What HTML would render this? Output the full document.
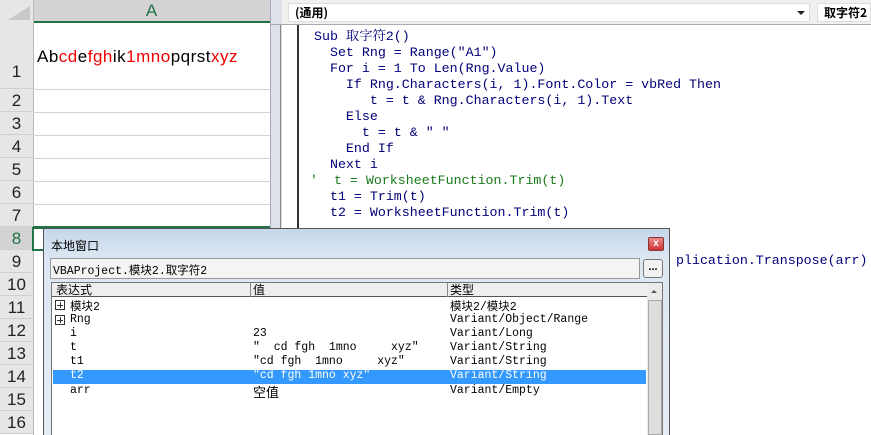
<!DOCTYPE html>
<html><head><meta charset="utf-8"><style>
*{margin:0;padding:0;box-sizing:border-box}
body{width:871px;height:435px;overflow:hidden;background:#fff;position:relative;font-family:"Liberation Sans","Noto Sans CJK SC",sans-serif}
.a{position:absolute}
.rn{position:absolute;left:0;width:33px;text-align:center;font-size:17px;color:#222;background:#e6e6e6;border-bottom:1px solid #cfcfcf}
.hl{position:absolute;left:33px;width:237px;height:1px;background:#d4d4d4}
.code{position:absolute;left:314px;font-family:"Liberation Mono","Noto Serif CJK SC",monospace;font-size:13.3px;color:#00007a;white-space:pre;line-height:16px}
.m{font-family:"Liberation Mono","Noto Sans CJK SC",monospace;font-size:11.5px;white-space:pre;position:absolute;color:#000}
</style></head><body>
<div class="a" style="left:0;top:0;width:33px;height:22px;background:#e6e6e6"></div>
<div class="a" style="left:8px;top:6px;width:0;height:0;border-left:22px solid transparent;border-bottom:14px solid #c8c8c8"></div>
<div class="a" style="left:33px;top:0;width:237px;height:22px;background:#d3d3d3;color:#217346;font-size:17px;text-align:center;line-height:22px">A</div>
<div class="a" style="left:33px;top:21px;width:237px;height:2px;background:#217346"></div>
<div class="a" style="left:33px;top:0;width:1px;height:435px;background:#bbb"></div>
<div class="rn" style="top:22px;height:67px;line-height:100px">1</div>
<div class="rn" style="top:89px;height:23px;line-height:23px">2</div>
<div class="rn" style="top:112px;height:23px;line-height:23px">3</div>
<div class="rn" style="top:135px;height:23px;line-height:23px">4</div>
<div class="rn" style="top:158px;height:23px;line-height:23px">5</div>
<div class="rn" style="top:181px;height:23px;line-height:23px">6</div>
<div class="rn" style="top:204px;height:23px;line-height:23px">7</div>
<div class="rn" style="top:227px;height:23px;line-height:23px;background:#d3d3d3;color:#217346">8</div>
<div class="rn" style="top:250px;height:23px;line-height:23px">9</div>
<div class="rn" style="top:273px;height:23px;line-height:23px">10</div>
<div class="rn" style="top:296px;height:23px;line-height:23px">11</div>
<div class="rn" style="top:319px;height:23px;line-height:23px">12</div>
<div class="rn" style="top:342px;height:23px;line-height:23px">13</div>
<div class="rn" style="top:365px;height:23px;line-height:23px">14</div>
<div class="rn" style="top:388px;height:23px;line-height:23px">15</div>
<div class="rn" style="top:411px;height:23px;line-height:23px">16</div>
<div class="hl" style="top:89px"></div><div class="hl" style="top:112px"></div><div class="hl" style="top:135px"></div><div class="hl" style="top:158px"></div><div class="hl" style="top:181px"></div><div class="hl" style="top:204px"></div>
<div class="a" style="left:33px;top:226px;width:237px;height:2px;background:#217346"></div>
<div class="a" style="left:32px;top:227px;width:12px;height:24px;border:2px solid #217346;border-right:none"></div>
<div class="a" style="left:37px;top:47px;font-size:17px;letter-spacing:0.5px;color:#000">Ab<span style="color:#e00">cd</span>e<span style="color:#e00">fgh</span>ik<span style="color:#e00">1mno</span>pqrst<span style="color:#e00">xyz</span></div>
<div class="a" style="left:270px;top:0;width:601px;height:435px;background:#fff"></div>
<div class="a" style="left:270px;top:0;width:601px;height:25px;background:#f0f0f0"></div>
<div class="a" style="left:270px;top:0;width:12px;height:435px;background:#dde2e8;border-left:1px solid #aab"></div>
<div class="a" style="left:280px;top:25px;width:1px;height:410px;background:#888"></div>
<div class="a" style="left:297px;top:25px;width:2px;height:410px;background:#333"></div>
<div class="a" style="left:288px;top:3px;width:522px;height:19px;background:#fff;border:1px solid #ddd;font-weight:bold;font-size:12px;line-height:17px;padding-left:6px;font-family:'Noto Sans CJK SC',sans-serif">(通用)</div>
<div class="a" style="left:797px;top:11px;border-left:4px solid transparent;border-right:4px solid transparent;border-top:4px solid #222"></div>
<div class="a" style="left:817px;top:3px;width:54px;height:19px;background:#fff;border:1px solid #ddd;font-weight:bold;font-size:12px;line-height:17px;padding-left:6px;font-family:'Noto Sans CJK SC',sans-serif">取字符2</div>
<div class="a" style="left:270px;top:24px;width:601px;height:1px;background:#aaa"></div>
<div class="code" style="top:29px">Sub 取字符2()
  Set Rng = Range("A1")
  For i = 1 To Len(Rng.Value)
    If Rng.Characters(i, 1).Font.Color = vbRed Then
       t = t &amp; Rng.Characters(i, 1).Text
    Else
      t = t &amp; " "
    End If
  Next i
<span style="color:#1a7a1a;margin-left:-4px">'  t = WorksheetFunction.Trim(t)</span>
  t1 = Trim(t)
  t2 = WorksheetFunction.Trim(t)</div>
<div class="code" style="top:253px;left:676px">plication.Transpose(arr)</div>
<div class="a" style="left:43px;top:228px;width:627px;height:207px;background:linear-gradient(#c6d6ea,#dce7f3 30px,#e4ecf6);border:1px solid #555;border-bottom:none"></div>
<div class="a" style="left:51px;top:237px;font-size:12px;font-family:'Noto Sans CJK SC',sans-serif">本地窗口</div>
<div class="a" style="left:648px;top:237px;width:16px;height:14px;background:linear-gradient(#e88,#c33);border:1px solid #833;border-radius:2px;color:#fff;font-size:10px;font-weight:bold;text-align:center;line-height:12px">x</div>
<div class="a" style="left:50px;top:258px;width:590px;height:21px;background:#f4f4f4;border:1px solid #999"></div>
<div class="m" style="left:53px;top:262px">VBAProject.模块2.取字符2</div>
<div class="a" style="left:643px;top:259px;width:20px;height:19px;background:#f2f2f2;border:1px solid #777;border-radius:3px;font-size:11px;font-weight:bold;text-align:center;line-height:14px">...</div>
<div class="a" style="left:51px;top:282px;width:612px;height:153px;background:#fff;border:1px solid #777;border-bottom:none"></div>
<div class="a" style="left:52px;top:283px;width:595px;height:14px;background:#eee;border-bottom:1px solid #555"></div>
<div class="a" style="left:250px;top:283px;width:1px;height:14px;background:#888"></div>
<div class="a" style="left:447px;top:283px;width:1px;height:14px;background:#888"></div>
<div class="m" style="left:56px;top:282px;font-family:'Noto Sans CJK SC',sans-serif;font-size:12px;line-height:15px">表达式</div>
<div class="m" style="left:253px;top:282px;font-family:'Noto Sans CJK SC',sans-serif;font-size:12px;line-height:15px">值</div>
<div class="m" style="left:450px;top:282px;font-family:'Noto Sans CJK SC',sans-serif;font-size:12px;line-height:15px">类型</div>
<div class="a" style="left:647px;top:283px;width:15px;height:152px;background:#eaeaea"></div>
<div class="a" style="left:651px;top:290px;border-left:3px solid transparent;border-right:3px solid transparent;border-bottom:3px solid #555"></div>
<div class="a" style="left:648px;top:300px;width:14px;height:135px;background:#ddd;border:1px solid #aaa"></div>
<div class="a" style="left:53px;top:370px;width:593px;height:14px;background:#3399ff"></div>
<div class="a" style="left:55px;top:300px;width:10px;height:10px;border:1px solid #333"></div><div class="a" style="left:57px;top:305px;width:6px;height:1px;background:#333"></div><div class="a" style="left:60px;top:302px;width:1px;height:6px;background:#333"></div>
<div class="a" style="left:55px;top:315px;width:10px;height:10px;border:1px solid #333"></div><div class="a" style="left:57px;top:320px;width:6px;height:1px;background:#333"></div><div class="a" style="left:60px;top:317px;width:1px;height:6px;background:#333"></div>
<div class="m" style="left:70px;top:298px">模块2</div><div class="m" style="left:450px;top:298px">模块2/模块2</div>
<div class="m" style="left:70px;top:313px">Rng</div><div class="m" style="left:450px;top:313px">Variant/Object/Range</div>
<div class="m" style="left:70px;top:327px">i</div><div class="m" style="left:253px;top:327px">23</div><div class="m" style="left:450px;top:327px">Variant/Long</div>
<div class="m" style="left:70px;top:341px">t</div><div class="m" style="left:253px;top:341px">"  cd fgh  1mno     xyz"</div><div class="m" style="left:450px;top:341px">Variant/String</div>
<div class="m" style="left:70px;top:355px">t1</div><div class="m" style="left:253px;top:355px">"cd fgh  1mno     xyz"</div><div class="m" style="left:450px;top:355px">Variant/String</div>
<div class="m" style="left:70px;top:369px;color:#fff">t2</div><div class="m" style="left:253px;top:369px;color:#fff">"cd fgh 1mno xyz"</div><div class="m" style="left:450px;top:369px;color:#fff">Variant/String</div>
<div class="m" style="left:70px;top:384px">arr</div><div class="m" style="left:253px;top:382px;font-size:13px">空值</div><div class="m" style="left:450px;top:384px">Variant/Empty</div>
</body></html>
